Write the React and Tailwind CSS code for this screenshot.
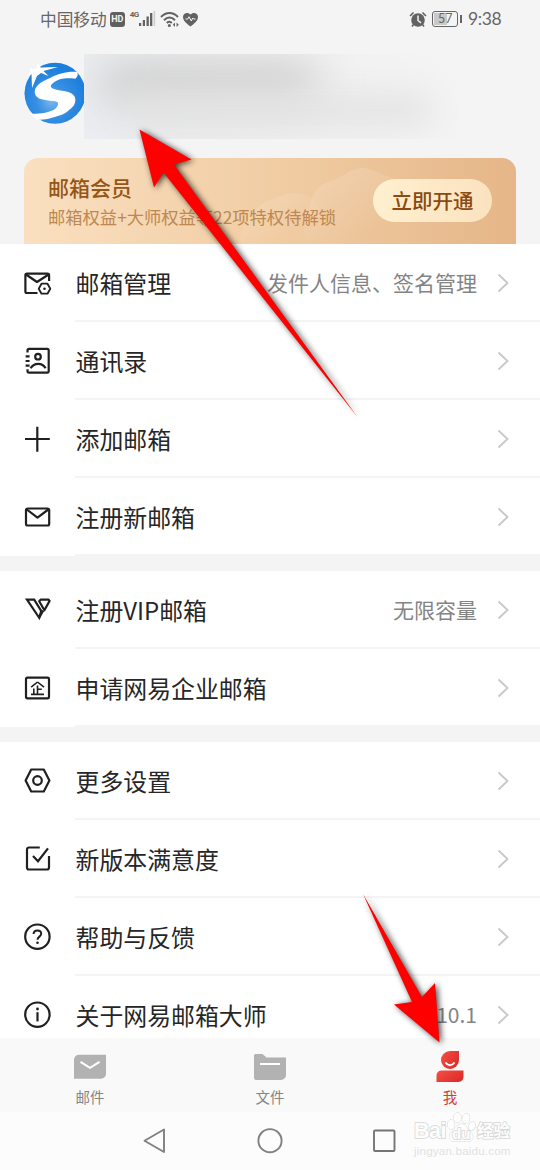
import React from "react";

const line = {
  fill: "none",
  stroke: "#202020",
  strokeWidth: 2.2,
  strokeLinejoin: "round",
};

function Icon({ children }) {
  return (
    <svg width="30" height="30" viewBox="0 0 30 30" className="ml-[22px] shrink-0" {...line}>
      {children}
    </svg>
  );
}

const icons = {
  manage: (
    <Icon>
      <path d="M15.500 25H5a1.600 1.600 0 0 1-1.600-1.600V7.200A1.600 1.600 0 0 1 5 5.600h20.500a1.600 1.600 0 0 1 1.600 1.600V13" />
      <path d="M4 6.500l11 7.500L26.600 6.500" />
      <path d="M19.500 15.700h6l2.800 5-2.800 5h-6l-2.800-5z" strokeWidth="1.800" />
      <circle cx="22.500" cy="20.700" r="1.300" fill="#202020" stroke="none" />
    </Icon>
  ),
  contacts: (
    <Icon>
      <path d="M5.500 6.600V4.500a1.600 1.600 0 0 1 1.600-1.600h18a1.600 1.600 0 0 1 1.600 1.600v20.500a1.600 1.600 0 0 1-1.600 1.600h-18A1.600 1.600 0 0 1 5.500 25v-1.800" />
      <path d="M3.600 10.400h4M3.600 15h4M3.600 19.600h4" />
      <circle cx="16" cy="10.700" r="2.800" />
      <path d="M8.600 22.200c1.800-3 4.600-4.400 7.600-4.400s5.700 1.400 7.400 4.400" />
    </Icon>
  ),
  add: (
    <Icon>
      <path d="M15.300 2.700v25M3 15h24.800" />
    </Icon>
  ),
  mail: (
    <Icon>
      <rect x="4" y="6.500" width="23.200" height="17" rx="1.800" />
      <path d="M4.800 7.500l10.700 8.200L26.300 7.500" />
    </Icon>
  ),
  vip: (
    <Icon>
      <path d="M5 4.700h7.200l7 11.300-2 6.800z" strokeLinejoin="miter" />
      <path d="M18.600 4.700h8l1 1.200-5.200 9.400-5.200-9z" />
      <path d="M17 23l4.200-7.500" />
    </Icon>
  ),
  company: (
    <Icon>
      <rect x="4" y="4.700" width="23" height="20.600" rx="1.500" />
      <path
        d="M15.500 9l-6.300 5.200M15.500 9l6.500 5.200M15.500 12.500v8.700M15.500 16.200h4.300M11.800 15.500v5.700M9 21.400h13"
        strokeWidth="1.600"
      />
    </Icon>
  ),
  settings: (
    <Icon>
      <path d="M9.200 3.500h12.600L27.400 14.500l-5.600 11H9.200L3.600 14.500z" />
      <circle cx="15.500" cy="14.500" r="4.300" />
    </Icon>
  ),
  survey: (
    <Icon>
      <path d="M17.800 3.500H7a2 2 0 0 0-2 2v18a2 2 0 0 0 2 2h18a2 2 0 0 0 2-2V12" />
      <path d="M11 12l5 5.200L26 4.400" strokeLinejoin="miter" />
    </Icon>
  ),
  help: (
    <Icon>
      <circle cx="15.400" cy="14.700" r="12.200" />
      <path d="M11.600 12.100c0-2.300 1.600-3.700 3.800-3.700s3.800 1.400 3.800 3.400c0 2.700-3.700 3-3.700 6" strokeWidth="2" />
      <circle cx="15.500" cy="20.800" r="1.300" fill="#202020" stroke="none" />
    </Icon>
  ),
  about: (
    <Icon>
      <circle cx="15.400" cy="14.700" r="12.200" />
      <path d="M15.500 12.200v9.200" />
      <circle cx="15.500" cy="9" r="1.400" fill="#202020" stroke="none" />
    </Icon>
  ),
};

const groups = [
  [
    { icon: "manage", label: "邮箱管理", value: "发件人信息、签名管理" },
    { icon: "contacts", label: "通讯录" },
    { icon: "add", label: "添加邮箱" },
    { icon: "mail", label: "注册新邮箱" },
  ],
  [
    { icon: "vip", label: "注册VIP邮箱", value: "无限容量" },
    { icon: "company", label: "申请网易企业邮箱" },
  ],
  [
    { icon: "settings", label: "更多设置" },
    { icon: "survey", label: "新版本满意度" },
    { icon: "help", label: "帮助与反馈" },
    { icon: "about", label: "关于网易邮箱大师", value: "7.10.1" },
  ],
];

function Row({ icon, label, value }) {
  return (
    <div className="flex h-[78px] shrink-0 items-stretch">
      <div className="flex w-[75px] shrink-0 items-center">{icons[icon]}</div>
      <div className="flex flex-1 items-center border-b-2 border-[#f4f4f4] pr-[31px] pl-[0.500px]">
        <span className="pt-[2px] text-[23.900px] leading-none whitespace-nowrap text-[#262626]">{label}</span>
        <span className="ml-auto text-[21px] leading-none whitespace-nowrap text-[#848484]">{value}</span>
        <svg width="12" height="20" viewBox="0 0 12 20" className="mt-[2px] ml-5 shrink-0" fill="none" stroke="#c9c9c9" strokeWidth="1.900">
          <path d="M1.500 1.500l9 8.500-9 8.500" />
        </svg>
      </div>
    </div>
  );
}

function StatusBar() {
  return (
    <div className="flex h-[38px] shrink-0 items-center pl-10 text-[#666]">
      <span className="text-[16.700px] leading-none">中国移动</span>
      <span className="ml-[3px] flex h-[15px] w-[15px] items-center justify-center rounded-[3px] bg-[#606060] font-['Roboto',sans-serif] text-[9px] leading-none font-bold text-[#f4f4f4]">
        HD
      </span>
      <span className="mb-[9px] ml-[5px] w-[9px] font-['Roboto',sans-serif] text-[8px] leading-none font-bold tracking-[-0.500px]">
        4G
      </span>
      <svg width="17" height="16" viewBox="0 0 17 16" fill="#626262">
        <rect x="0" y="12" width="2.200" height="3" />
        <rect x="3.800" y="9" width="2.200" height="6" />
        <rect x="7.500" y="5.500" width="2.300" height="9.500" />
        <rect x="11" y="2" width="2.300" height="13" />
        <rect x="14.500" y="0" width="1.700" height="15" fill="#cfcfcf" />
      </svg>
      <svg width="20" height="17" viewBox="0 0 20 17" className="ml-[4px]" fill="none" stroke="#626262" strokeWidth="2">
        <path d="M1 6c5-5.300 12-5.300 17 0M4 9.200c3.500-3.500 7.500-3.500 11 0M6.800 12c1.700-1.600 3.500-1.600 5 0" />
        <circle cx="9.300" cy="14.500" r="1.500" fill="#626262" stroke="none" />
        <path d="M12.800 13.800l2.200-2.300v4.600zM18.800 13.800l-2.200-2.300v4.600z" fill="#626262" stroke="none" />
      </svg>
      <svg width="17" height="15" viewBox="0 0 17 15" className="ml-[2px]">
        <path d="M8.500 14.500C5 11.800 1 8.800 1 4.700 1 1 6 -.500 8.500 2.500 11-.500 16 1 16 4.700c0 4.100-4 7.100-7.500 9.800z" fill="#626262" />
        <path d="M3.500 7h2.300l1.200-2.300 2.300 4.300 1.400-3 .8 1h2" fill="none" stroke="#f4f4f4" strokeWidth="1" />
      </svg>
      <svg width="18" height="17" viewBox="0 0 18 17" className="ml-auto">
        <circle cx="9" cy="9" r="6.800" fill="#626262" />
        <path d="M1 5l3.500-3.500M17 5l-3.500-3.500M4.500 13.500l-1.500 2M13.500 13.500l1.500 2" stroke="#626262" strokeWidth="1.600" />
        <path d="M9 4.500v5l3 2.300" stroke="#f4f4f4" strokeWidth="1.500" fill="none" />
      </svg>
      <span className="ml-[5px] flex h-[16px] w-[26px] items-center rounded-[3px] border-[1.500px] border-[#666] p-[1px]">
        <span className="flex h-full w-[13px] items-center bg-[#c9c9c9] pl-[4px] font-['Lato',sans-serif] text-[12.500px] leading-none">
          57
        </span>
      </span>
      <span className="ml-[2px] h-[8px] w-[2px] bg-[#666]" />
      <span className="mr-[38px] ml-[6px] w-[34px] font-['Lato',sans-serif] text-[17.500px] leading-none tracking-[-0.400px]">
        9:38
      </span>
    </div>
  );
}

function Avatar() {
  return (
    <svg width="60" height="63" viewBox="0 0 60 63" className="mt-[24px] shrink-0">
      <defs>
        <radialGradient id="ball" cx="0.450" cy="0.620" r="0.550">
          <stop offset="0" stopColor="#7ab8f0" />
          <stop offset="0.450" stopColor="#3990e2" />
          <stop offset="1" stopColor="#1c7fdd" />
        </radialGradient>
      </defs>
      <circle cx="31" cy="31.300" r="30.500" fill="url(#ball)" />
      <path
        d="M53 10C44 9 34 12 27 15.500 18 19 10.500 24 10.700 30c.3 6 6 7.500 13.300 8.500 6 .8 10 .5 10 3 0 4-4 7-10 8.500-5 1.500-11 2-17 1.500l5 6c7 .5 13-.5 18.700-2.500 6-1.500 10-3 13.300-6 4-3 7-6 7.300-10 .7-4-2-7.500-7-9-6-1.800-11-1.500-15-3.300-3-1.200-3-3.200-1-5 3-3 7-4.700 11.700-5.200 4-.4 7-.2 11.300.2 2.500-2 3.200-5 1.700-6.700z"
        fill="#fff"
      />
      <path d="M5 6l6.500 1.500L14 1l2.500 4.500L34 5l-14.500 4 5 5-7.500-3L13 14 8 26l-.5-14L3 13l4-4z" fill="#fff" />
    </svg>
  );
}

function MemberCard() {
  return (
    <div className="relative mx-6 mt-[34px] flex h-[86px] overflow-hidden rounded-t-[14px] bg-linear-to-r from-[#fae0c0] via-[#f1cda4] to-[#e5b688]">
      <svg className="absolute top-0 left-0" width="492" height="86" viewBox="0 0 492 86">
        <defs>
          <linearGradient id="cloud" x1="0" y1="0" x2="0.700" y2="1">
            <stop offset="0" stopColor="#fff" stopOpacity="0.180" />
            <stop offset="0.800" stopColor="#fff" stopOpacity="0" />
          </linearGradient>
        </defs>
        <path d="M215 86c3-22 14-34 26-42l16-6c12-5 22-4 32 4 8 10 12 26 12 44z" fill="url(#cloud)" />
        <path d="M284 86c-8-14-2-24 1-34 2-15 8-25 22-29 10-2 18-12 30-13 12 0 20 7 36 12l40 64z" fill="url(#cloud)" />
      </svg>
      <div className="relative flex flex-col pt-[18px] pl-[24px] whitespace-nowrap">
        <span className="text-[21px] leading-[22px] font-medium text-[#955617]">邮箱会员</span>
        <span className="mt-[8px] text-[17.300px] leading-[22px] text-[#bd8851]">邮箱权益+大师权益等22项特权待解锁</span>
      </div>
      <div className="relative mt-[21px] mr-[24px] ml-auto flex h-[43px] w-[119px] items-center justify-center rounded-full bg-linear-to-r from-[#fff0d0] to-[#fbe2bf] text-[20.500px] leading-none font-medium text-[#8a4a10]">
        立即开通
      </div>
    </div>
  );
}

const tabs = [
  {
    label: "邮件",
    color: "text-[#858585]",
    art: (
      <svg width="32" height="34" viewBox="0 0 32 34">
        <path d="M5 4.800h27v19a5 5 0 0 1-5 5H0V9.800a5 5 0 0 1 5-5z" fill="#b2b2b2" />
        <path d="M6.500 11.800l9.500 6 9.500-6" fill="none" stroke="#fff" strokeWidth="2" />
      </svg>
    ),
  },
  {
    label: "文件",
    color: "text-[#858585]",
    art: (
      <svg width="32" height="34" viewBox="0 0 32 34">
        <path d="M0 5.500a1.500 1.500 0 0 1 1.500-1.500H8.500L12.500 7.500H32v17.500a5 5 0 0 1-5 5H2a2 2 0 0 1-2-2z" fill="#b2b2b2" />
        <path d="M6 14h20" stroke="#fff" strokeWidth="2" />
      </svg>
    ),
  },
  {
    label: "我",
    color: "text-[#d63a3a]",
    art: (
      <svg width="32" height="34" viewBox="0 0 32 34">
        <defs>
          <linearGradient id="me" x1="0" y1="0" x2="1" y2="0.600">
            <stop offset="0" stopColor="#f65045" />
            <stop offset="1" stopColor="#dd2d2b" />
          </linearGradient>
        </defs>
        <path d="M16 1h9v9a9 9 0 1 1-9-9z" fill="url(#me)" />
        <path d="M11.500 12.500c2.500 3.600 6.500 3.600 9 0" fill="none" stroke="#fff" strokeWidth="2" />
        <path d="M7.500 20.500H29.500V27a5 5 0 0 1-5 5H2.500V25.500a5 5 0 0 1 5-5z" fill="url(#me)" />
      </svg>
    ),
  },
];

function Watermark() {
  return (
    <div className="absolute top-[1110px] left-[414px] flex w-[100px] flex-col">
      <div className="flex h-[34px] items-end font-['Liberation_Sans',sans-serif] text-[#fdfdfd] [paint-order:stroke_fill] [-webkit-text-stroke:1.500px_#d6d6d6]">
        <span className="w-[32px] text-[21.500px] leading-[25px] font-bold tracking-[-0.500px]">Bai</span>
        <span className="relative h-[34px] w-[30px]">
          <svg width="30" height="34" viewBox="0 0 30 34" className="absolute top-0 left-0" fill="#fdfdfd" stroke="#d8d8d8">
            <ellipse cx="11.500" cy="7.500" rx="3.700" ry="5" />
            <ellipse cx="20" cy="8.500" rx="3.600" ry="5" transform="rotate(12 20 8.500)" />
            <ellipse cx="5" cy="14.500" rx="3.300" ry="4.600" />
            <ellipse cx="26" cy="16" rx="3" ry="4.300" transform="rotate(20 26 16)" />
            <path d="M15.500 14c4 0 5 4 9 8 4 4 3 9.500-3 9.500h-13c-5 0-7-5.500-3-9.500 4-4 6-8 10-8z" />
          </svg>
          <span className="absolute top-[16px] left-[6px] text-[15px] leading-none font-bold">du</span>
        </span>
        <span className="ml-[1px] font-['Noto_Sans_CJK_SC',sans-serif] text-[16.500px] leading-[27px] font-bold">经验</span>
      </div>
      <span className="font-['Liberation_Sans',sans-serif] text-[11.700px] leading-[13px] tracking-[0.150px] whitespace-nowrap text-[#e2e2e2]">
        jingyan.baidu.com
      </span>
    </div>
  );
}

export default function App() {
  return (
    <div className="relative flex h-[1170px] w-[540px] flex-col overflow-hidden bg-[#f4f4f4] font-['Noto_Sans_CJK_SC',sans-serif]">
      <StatusBar />
      <div className="flex h-[86px] shrink-0 pl-6">
        <Avatar />
        <div className="mt-4 h-[85px] w-[374px] shrink-0 overflow-hidden bg-linear-to-r from-[#ebedf0] via-[#f0f0f0] via-40% to-[#f4f4f4]">
          <div className="mt-[10px] ml-[15px] h-[38px] w-[220px] rounded-[19px] bg-[#cacaca] blur-[21px]" />
          <div className="mt-[-8px] ml-[40px] h-[32px] w-[310px] rounded-[16px] bg-[#e3e3e3] blur-[16px]" />
        </div>
      </div>
      <div className="shrink-0">
        <MemberCard />
      </div>
      <main className="flex min-h-0 flex-1 flex-col gap-[15px] overflow-hidden">
        {groups.map((rows, i) => (
          <section key={i} className="shrink-0 bg-white">
            {rows.map((row) => (
              <Row key={row.label} {...row} />
            ))}
          </section>
        ))}
      </main>
      <nav className="grid h-[74px] shrink-0 grid-cols-3 bg-[#f9f9f9]">
        {tabs.map((tab) => (
          <div key={tab.label} className="flex flex-col items-center pt-[12px]">
            {tab.art}
            <span className={"mt-[4px] text-[14.500px] leading-[17px] " + tab.color}>{tab.label}</span>
          </div>
        ))}
      </nav>
      <div className="flex h-[58px] shrink-0 items-center bg-[#fcfcfc] pl-[142px]">
        <svg width="24" height="28" viewBox="0 0 24 28" fill="none" stroke="#808080" strokeWidth="1.900" strokeLinejoin="round">
          <path d="M22 2.500v22.500L2.500 13.700z" />
        </svg>
        <svg width="28" height="28" viewBox="0 0 28 28" className="ml-[90px]" fill="none" stroke="#808080" strokeWidth="1.900">
          <circle cx="14" cy="13.700" r="11.600" />
        </svg>
        <svg width="28" height="28" viewBox="0 0 28 28" className="ml-[86px]" fill="none" stroke="#757575" strokeWidth="1.900">
          <rect x="4" y="3.500" width="20.500" height="20.500" rx="1" />
        </svg>
      </div>
      <Watermark />
      <svg
        className="pointer-events-none absolute top-0 left-0 [filter:drop-shadow(2px_1px_3px_rgba(0,0,0,0.750))]"
        width="540"
        height="1170"
        viewBox="0 0 540 1170"
        fill="#fe0000"
      >
        <path d="M139.500 129.500L191.500 159.500 174 164.500 357.500 417 163.500 172.500 154 187.500z" />
        <path d="M363 894L422 997 435 983 439.500 1042.500 394 1004.500 412 1002z" />
      </svg>
    </div>
  );
}
